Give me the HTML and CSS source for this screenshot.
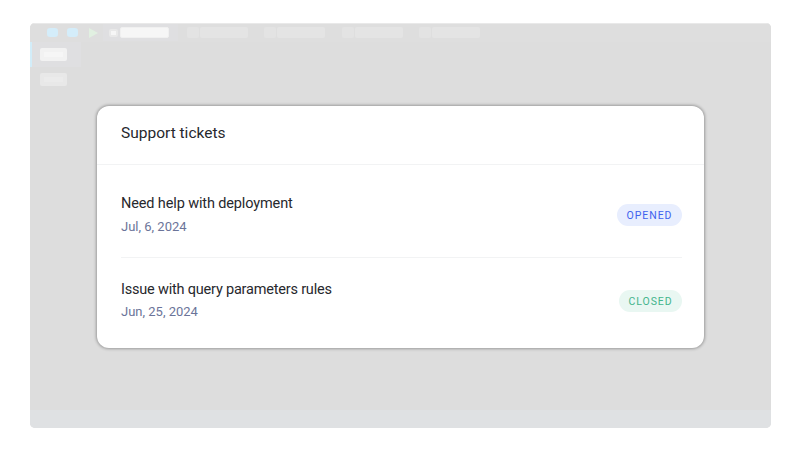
FILE: index.html
```html
<!DOCTYPE html>
<html lang="en">
<head>
<meta charset="utf-8">
<title>Support tickets</title>
<link rel="stylesheet" href="styles.css">
</head>
<body>
<div class="window">
  <header class="toolbar">
    <span class="dot"></span>
    <span class="dot"></span>
    <svg class="play" width="9" height="10" viewBox="0 0 9 10"><path d="M0 0L9 5L0 10Z" fill="#e1f0e1"/></svg>
    <nav class="tabs">
      <span class="tab active"><i class="glyph"></i><b class="name"></b></span>
      <span class="tab"><i class="glyph"></i><b class="name"></b></span>
      <span class="tab"><i class="glyph"></i><b class="name"></b></span>
      <span class="tab"><i class="glyph"></i><b class="name"></b></span>
      <span class="tab"><i class="glyph"></i><b class="name"></b></span>
    </nav>
  </header>
  <div class="workspace">
    <aside class="sidebar">
      <div class="item current"><span></span></div>
      <div class="item"><span></span></div>
    </aside>
    <main class="card">
      <h1>Support tickets</h1>
      <ul>
        <li>
          <div><h2 class="roomy">Need help with deployment</h2><time>Jul, 6, 2024</time></div>
          <span class="badge opened">OPENED</span>
        </li>
        <li>
          <div><h2>Issue with query parameters rules</h2><time class="raised">Jun, 25, 2024</time></div>
          <span class="badge closed">CLOSED</span>
        </li>
      </ul>
    </main>
  </div>
  <footer class="status"></footer>
</div>
</body>
</html>
```
FILE: styles.css
```css
* { box-sizing: border-box; }
body {
  margin: 0;
  padding: 23px 29px 26px 30px;
  height: 454px;
  background: #fff;
  font-family: Roboto, "Liberation Sans", sans-serif;
  overflow: hidden;
}
.window {
  height: 405px;
  display: flex;
  flex-direction: column;
  border-radius: 5px;
  overflow: hidden;
  background: #ddd;
}
.toolbar {
  height: 19px;
  flex: none;
  display: flex;
  align-items: center;
  padding-left: 17px;
  padding-bottom: 1px;
  border-top: 1px solid #e9e9e9;
  background: #dedede;
}
.dot {
  width: 11px;
  height: 9px;
  border-radius: 3px;
  background: #d4edfa;
  margin-right: 9px;
}
.play { margin-left: 2px; }
.tabs { display: flex; margin-left: 5px; height: 17px; }
.tab {
  width: 77.6px;
  display: flex;
  align-items: center;
  gap: 1px;
  padding-left: 6px;
}
.tab .glyph { width: 12px; height: 11px; border-radius: 2px; background: #e3e3e3; }
.tab .name { width: 48px; height: 11px; border-radius: 2px; background: #e4e4e4; }
.tab.active { gap: 2px; background: linear-gradient(to right, #dfdfe1 75px, transparent 75px); }
.tab.active .glyph { width: 9px; height: 8px; border: 2px solid #e9e9e9; background: #f6f6f6; }
.tab.active .name { background: #f6f6f6; border: 1px solid #f0f0f0; width: 49px; }
.workspace {
  flex: 1;
  display: flex;
  align-items: flex-start;
}
.sidebar { width: 67px; height: 100%; flex: none; }
.item {
  width: 51px;
  height: 25px;
  display: flex;
  align-items: center;
  padding-left: 10px;
}
.item.current { border-left: 2px solid #d2edf9; padding-left: 8px; background: #dfdfe1; }
.item span {
  width: 27px;
  height: 13px;
  border-radius: 2px;
  border: 4px solid #e8e8e8;
  background: #ebebeb;
}
.item.current span { border-color: #f2f2f2; background: #f6f6f6; }
.card {
  width: 607px;
  height: 242px;
  margin-top: 64px;
  border-radius: 12px;
  background: #fff;
  box-shadow: 0 0 3px 1px rgba(0, 0, 0, .3);
  color: #27282d;
}
h1 {
  margin: 0;
  height: 59px;
  padding: 0 24px;
  border-bottom: 1px solid #f2f3f4;
  font-size: 15.5px;
  font-weight: 400;
  line-height: 55px;
}
ul { list-style: none; margin: 0; padding: 7px 22px 0 24px; }
li {
  height: 86px;
  display: flex;
  align-items: center;
  justify-content: space-between;
}
li:first-child { border-bottom: 1px solid #f2f3f4; }
h2 {
  margin: 0;
  font-size: 14.5px;
  font-weight: 400;
  line-height: 23px;
  letter-spacing: -.2px;
}
h2.roomy { letter-spacing: -.13px; }
time {
  display: block;
  font-size: 13px;
  line-height: 23px;
  color: #6b7499;
}
time.raised { margin: -1px 0 1px; }
.badge {
  display: flex;
  align-items: center;
  justify-content: center;
  border-radius: 12px;
  font-size: 10.5px;
  font-weight: 400;
  letter-spacing: .95px;
}
.opened { width: 65px; height: 22px; margin-top: 1px; background: #e8eefe; color: #4062ee; }
.closed { width: 63px; height: 22px; background: #e9f7f2; color: #43b58c; }
.status { height: 18px; flex: none; background: #dfe1e3; }
```
